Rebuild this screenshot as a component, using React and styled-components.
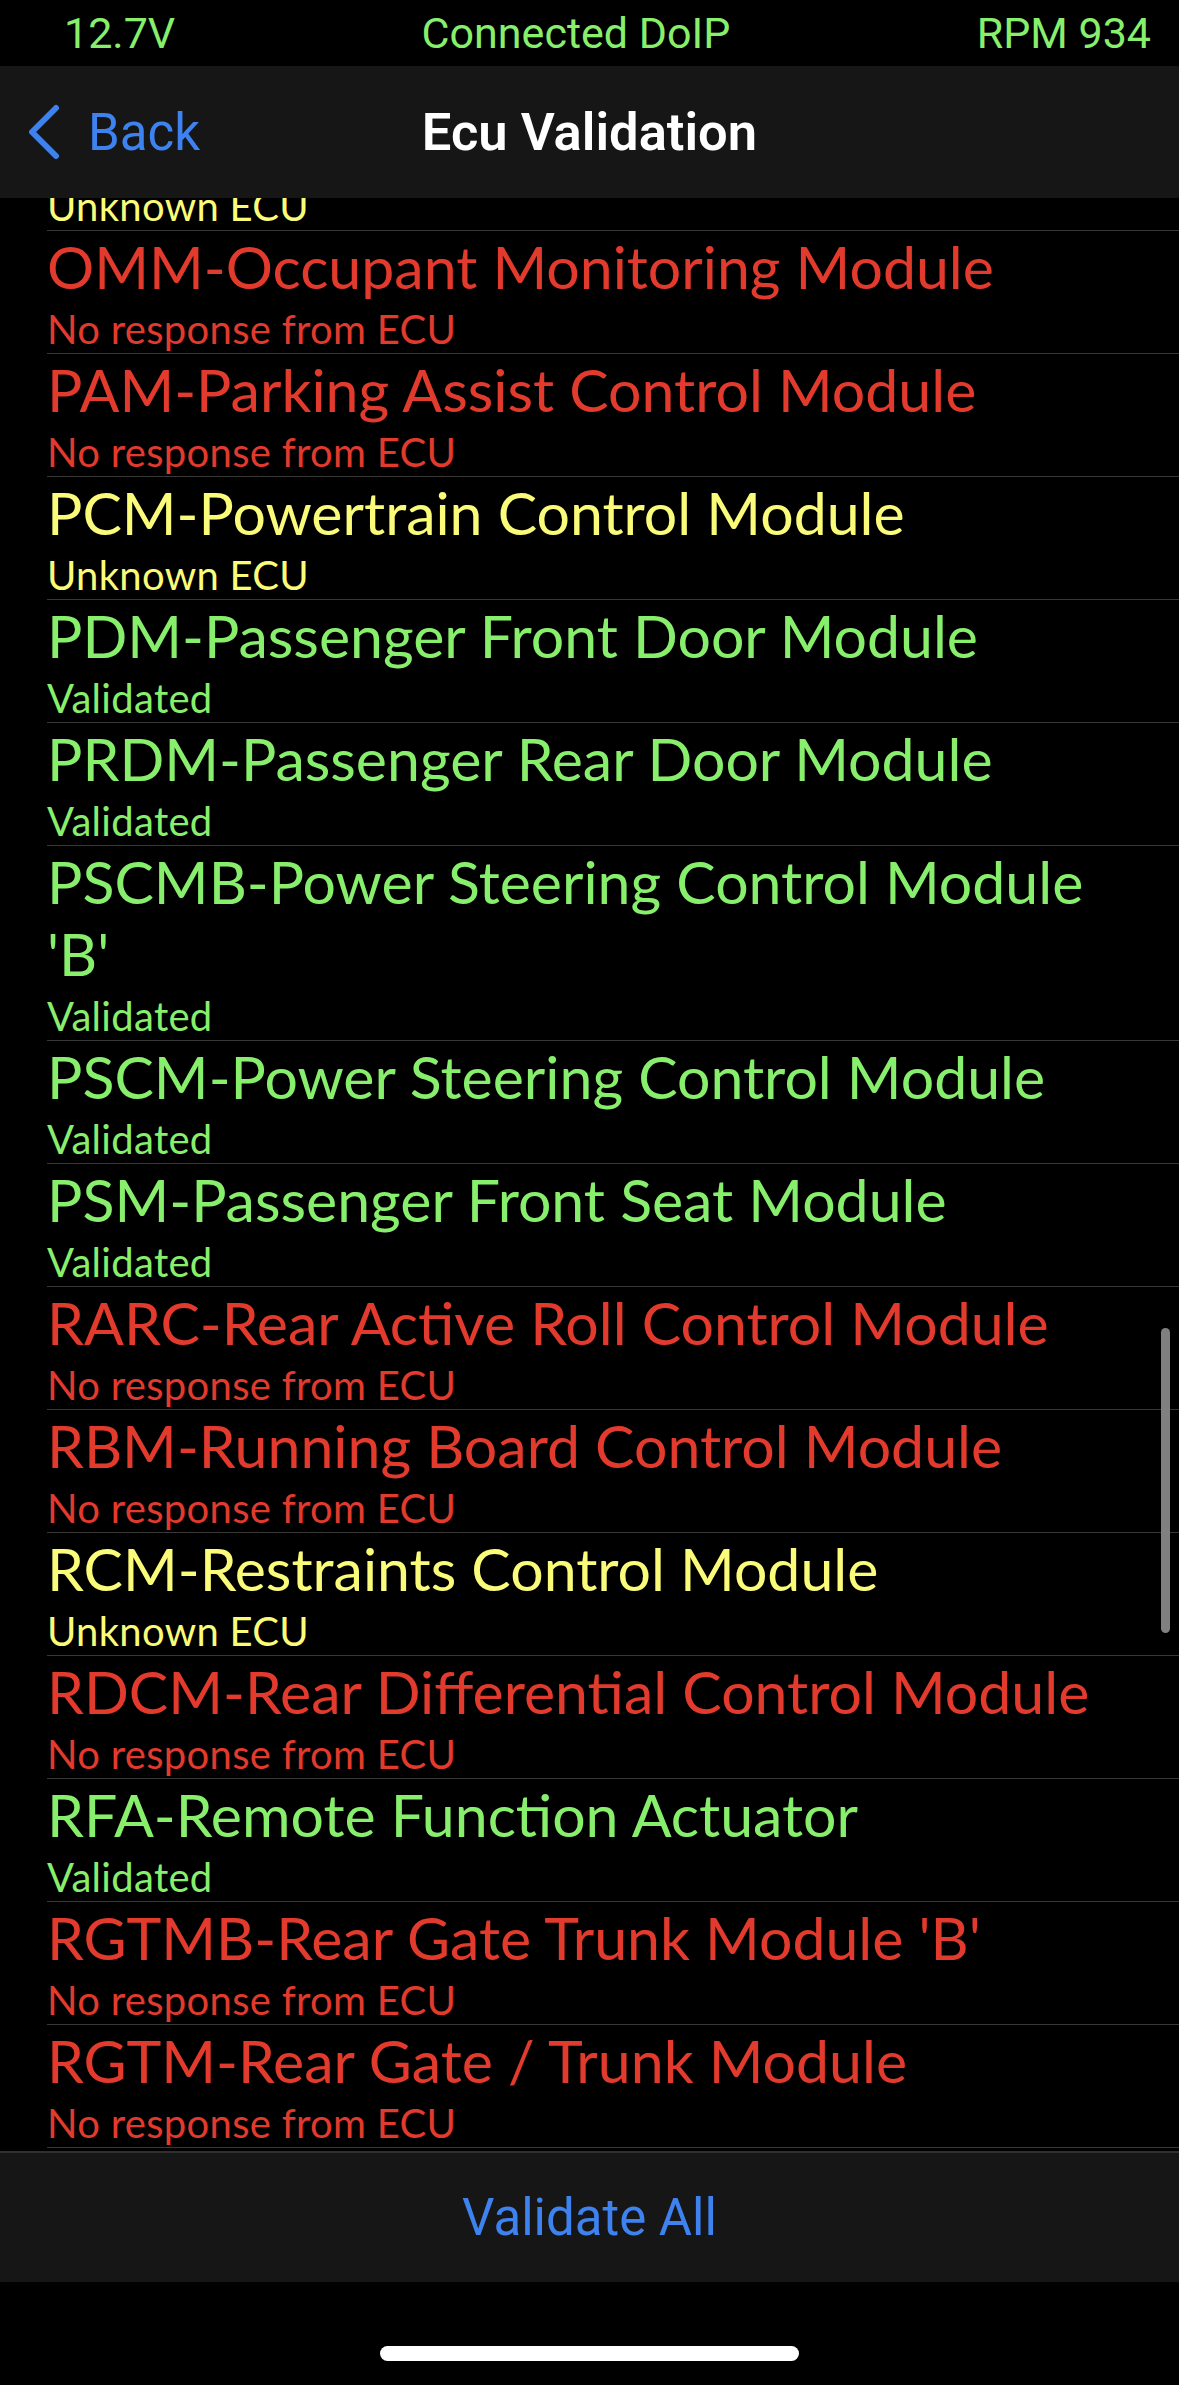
import React from 'react'
import styled, { createGlobalStyle } from 'styled-components'

const GlobalStyle = createGlobalStyle`
  html, body {
    margin: 0;
    padding: 0;
    background: #000;
  }
  * { box-sizing: border-box; }
`

const COLORS = {
    red: '#e23a2c',
    yellow: '#fbfb7a',
    green: '#88ef6d',
}

// first row sits mostly under the nav bar (list is scrolled)
const modules = [
    { name: 'OCS-Occupant Classification', status: 'Unknown ECU', color: 'yellow' },
    { name: 'OMM-Occupant Monitoring Module', status: 'No response from ECU', color: 'red' },
    { name: 'PAM-Parking Assist Control Module', status: 'No response from ECU', color: 'red' },
    { name: 'PCM-Powertrain Control Module', status: 'Unknown ECU', color: 'yellow' },
    { name: 'PDM-Passenger Front Door Module', status: 'Validated', color: 'green' },
    { name: 'PRDM-Passenger Rear Door Module', status: 'Validated', color: 'green' },
    { name: "PSCMB-Power Steering Control Module 'B'", status: 'Validated', color: 'green' },
    { name: 'PSCM-Power Steering Control Module', status: 'Validated', color: 'green' },
    { name: 'PSM-Passenger Front Seat Module', status: 'Validated', color: 'green' },
    { name: 'RARC-Rear Active Roll Control Module', status: 'No response from ECU', color: 'red' },
    { name: 'RBM-Running Board Control Module', status: 'No response from ECU', color: 'red' },
    { name: 'RCM-Restraints Control Module', status: 'Unknown ECU', color: 'yellow' },
    { name: 'RDCM-Rear Differential Control Module', status: 'No response from ECU', color: 'red' },
    { name: 'RFA-Remote Function Actuator', status: 'Validated', color: 'green' },
    { name: "RGTMB-Rear Gate Trunk Module 'B'", status: 'No response from ECU', color: 'red' },
    { name: 'RGTM-Rear Gate / Trunk Module', status: 'No response from ECU', color: 'red' },
]

const App = () => {
  return (
    <Screen>
        <GlobalStyle />
        <StatusBar>
            <span>12.7V</span>
            <span>Connected DoIP</span>
            <span>RPM 934</span>
        </StatusBar>
        <NavBar>
            <BackButton>
                <svg width="36" height="56" viewBox="0 0 36 56" fill="none">
                    <path d="M30 4 L6 28 L30 52" stroke="#3e82f0" strokeWidth="6" strokeLinecap="round" strokeLinejoin="round" />
                </svg>
                Back
            </BackButton>
            <NavTitle>Ecu Validation</NavTitle>
            <div />
        </NavBar>
        <ListViewport>
            <List>
                {modules.map((m) => (
                    <Row key={m.name}>
                        <Title color={COLORS[m.color]}>{m.name}</Title>
                        <Status color={COLORS[m.color]}>{m.status}</Status>
                    </Row>
                ))}
            </List>
            <ScrollIndicator />
        </ListViewport>
        <Footer>
            <FooterButton>Validate All</FooterButton>
        </Footer>
        <HomeArea>
            <HomeIndicator />
        </HomeArea>
    </Screen>
  )
}

export default App;

const Screen = styled.div`
    width: 1179px;
    height: 2385px;
    background: #000;
    display: flex;
    flex-direction: column;
    overflow: hidden;
`

const StatusBar = styled.div`
    height: 66px;
    flex-shrink: 0;
    display: flex;
    justify-content: space-between;
    align-items: center;
    padding: 0 28px 0 64px;
    font-family: Roboto, 'Liberation Sans', sans-serif;
    font-size: 43px;
    color: #88ef6d;
`

const NavBar = styled.div`
    height: 132px;
    flex-shrink: 0;
    background: #161616;
    display: grid;
    grid-template-columns: 1fr auto 1fr;
    align-items: center;
    font-family: Roboto, 'Liberation Sans', sans-serif;
`

const BackButton = styled.div`
    display: flex;
    align-items: center;
    gap: 26px;
    padding-left: 26px;
    color: #3e82f0;
    font-size: 51px;
    svg { flex-shrink: 0; }
`

const NavTitle = styled.div`
    color: #fff;
    font-size: 52.5px;
    font-weight: 600;
`

const ListViewport = styled.div`
    position: relative;
    height: 1953px;
    flex-shrink: 0;
    overflow: hidden;
`

const List = styled.div`
    margin-top: -90px;
    padding-left: 47px;
`

const Row = styled.div`
    border-bottom: 1px solid #383838;
    padding-right: 60px;
    font-family: Lato, 'Open Sans', sans-serif;
`

const Title = styled.div`
    color: ${props => props.color};
    font-size: 59px;
    line-height: 72px;
`

const Status = styled.div`
    color: ${props => props.color};
    font-size: 40px;
    line-height: 47px;
    padding-top: 3px;
    letter-spacing: 0.3px;
`

const ScrollIndicator = styled.div`
    position: absolute;
    right: 9px;
    top: 1130px;
    width: 9px;
    height: 305px;
    border-radius: 5px;
    background: #808080;
`

const Footer = styled.div`
    height: 131px;
    flex-shrink: 0;
    background: #161616;
    border-top: 2px solid #303030;
    display: flex;
    justify-content: center;
    align-items: center;
`

const FooterButton = styled.div`
    color: #3e82f0;
    font-family: Roboto, 'Liberation Sans', sans-serif;
    font-size: 51px;
`

const HomeArea = styled.div`
    flex: 1;
    display: flex;
    justify-content: center;
    padding-top: 64px;
`

const HomeIndicator = styled.div`
    width: 419px;
    height: 15px;
    border-radius: 8px;
    background: #fff;
`
